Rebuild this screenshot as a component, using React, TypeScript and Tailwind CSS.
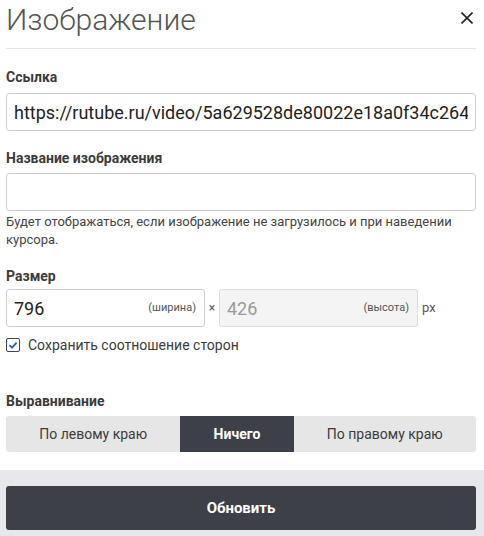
import React, { useState } from 'react';

const font = "font-['Roboto','Liberation_Sans',sans-serif]";

const alignOptions = ['По левому краю', 'Ничего', 'По правому краю'];

const Label: React.FC<{ children: React.ReactNode; className?: string }> = ({ children, className = 'mb-[6px]' }) => (
  <div className={`text-[14px] leading-[20px] font-bold text-[#3b3b3b] ${className}`}>{children}</div>
);

export default function App() {
  const [align, setAlign] = useState('Ничего');
  const [keepRatio, setKeepRatio] = useState(true);

  return (
    <div className={`${font} w-[484px] h-[536px] bg-white flex flex-col overflow-hidden`}>
      <div className="flex-1 pl-[6px] pr-[8px]">
        {/* Header */}
        <div className="h-[49px] flex items-start justify-between border-b border-[#e6e6e6] pt-[2px]">
          <h1 className="text-[30px] leading-[36px] font-light text-[#555]">Изображение</h1>
          <button className="mt-[10px] mr-[3px] text-[#222]" aria-label="Закрыть">
            <svg width="12" height="12" viewBox="0 0 12 12">
              <path d="M0.5 0.5 L11.5 11.5 M11.5 0.5 L0.5 11.5" stroke="currentColor" strokeWidth="1.6" />
            </svg>
          </button>
        </div>

        {/* Link */}
        <div className="mt-[18px]">
          <Label>Ссылка</Label>
          <input
            defaultValue="https://rutube.ru/video/5a629528de80022e18a0f34c264"
            className="w-full h-[38px] border border-[#cfcfcf] rounded-[3px] px-[7px] text-[18px] text-[#222] outline-none"
          />
        </div>

        {/* Title */}
        <div className="mt-[17px]">
          <Label className="mb-[5px]">Название изображения</Label>
          <input className="w-full h-[38px] border border-[#cfcfcf] rounded-[3px] px-[7px] text-[18px] text-[#222] outline-none" />
          <p className="text-[13px] leading-[18px] text-[#444] mt-[2px]">
            Будет отображаться, если изображение не загрузилось и при наведении курсора.
          </p>
        </div>

        {/* Size */}
        <div className="mt-[17px]">
          <Label className="mb-[3px]">Размер</Label>
          <div className="flex items-center">
            <div className="w-[199px] h-[38px] border border-[#cfcfcf] rounded-[3px] flex items-center pl-[7px] pr-[8px]">
              <span className="flex-1 text-[18px] text-[#222]">796</span>
              <span className="text-[11px] text-[#555]">(ширина)</span>
            </div>
            <span className="w-[14px] text-center text-[12px] text-[#555]">×</span>
            <div className="w-[199px] h-[38px] border border-[#dcdcdc] bg-[#f4f4f4] rounded-[3px] flex items-center pl-[7px] pr-[8px]">
              <span className="flex-1 text-[18px] text-[#9a9a9a]">426</span>
              <span className="text-[11px] text-[#555]">(высота)</span>
            </div>
            <span className="ml-[4px] text-[13px] text-[#555]">px</span>
          </div>
          <label className="flex items-center mt-[8px] h-[20px] cursor-pointer" onClick={() => setKeepRatio(!keepRatio)}>
            <span className="w-[14px] h-[14px] border-[1.5px] border-[#34476a] rounded-[2px] flex items-center justify-center">
              {keepRatio && (
                <svg width="10" height="10" viewBox="0 0 10 10">
                  <path d="M1.5 5.2 L4 7.6 L8.6 2.6" fill="none" stroke="#2f5da6" strokeWidth="1.8" />
                </svg>
              )}
            </span>
            <span className="ml-[8px] text-[14px] text-[#3b3b3b]">Сохранить соотношение сторон</span>
          </label>
        </div>

        {/* Alignment */}
        <div className="mt-[36px]">
          <Label className="mb-[5px]">Выравнивание</Label>
          <div className="flex h-[36px] rounded-[3px] overflow-hidden bg-[#e6e6e6]">
            {alignOptions.map((opt) => (
              <button
                key={opt}
                onClick={() => setAlign(opt)}
                className={`flex-auto px-[10px] text-[14px] ${
                  align === opt ? 'bg-[#3d4048] text-white font-bold' : 'text-[#3b3b3b]'
                }`}
              >
                {opt}
              </button>
            ))}
          </div>
        </div>
      </div>

      {/* Footer */}
      <div className="h-[66px] bg-[#e7e8eb] pl-[6px] pr-[8px] pt-[16px]">
        <button className="w-full h-[44px] rounded-[3px] bg-[#3d4048] text-white text-[15px] font-bold">
          Обновить
        </button>
      </div>
    </div>
  );
}
